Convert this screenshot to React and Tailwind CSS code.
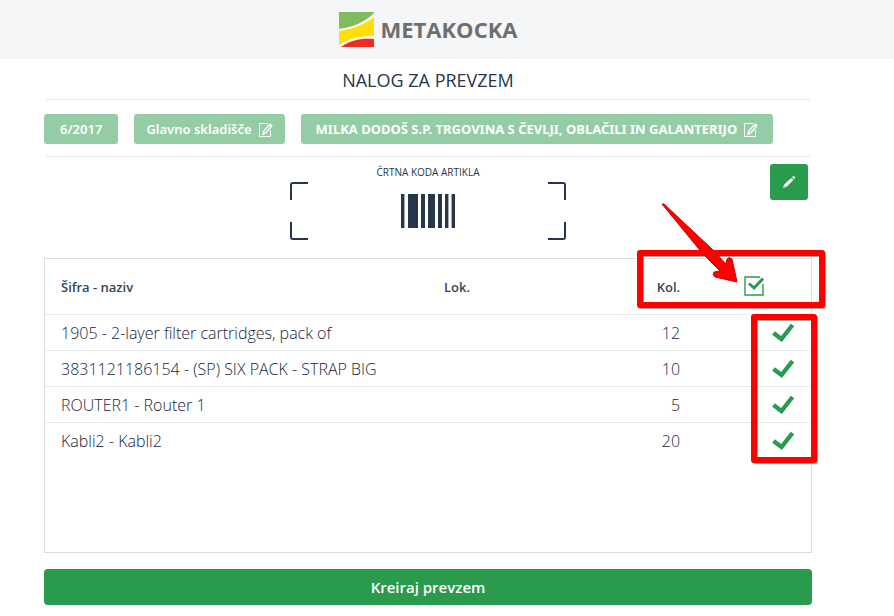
const items = [
  { name: '1905 - 2-layer filter cartridges, pack of', location: '', quantity: 12 },
  { name: '3831121186154 - (SP) SIX PACK - STRAP BIG', location: '', quantity: 10 },
  { name: 'ROUTER1 - Router 1', location: '', quantity: 5 },
  { name: 'Kabli2 - Kabli2', location: '', quantity: 20 },
];

function Logo() {
  return (
    <a href="#" className="flex items-start gap-[7px] pt-3" aria-label="Metakocka">
      <svg width="35" height="35" viewBox="0 0 36 35" preserveAspectRatio="none" aria-hidden="true">
        <rect width="36" height="35" fill="#fbfaf0" />
        <path d="M0 0H36V1C28 9 16 15 0 17Z" fill="#80bb62" />
        <path d="M0 19C15 17 27 12 36 5V24C22 24 9 27 0 33Z" fill="#ffde0a" />
        <path d="M2 35C12 28 23 26 36 27V35Z" fill="#eb2d26" />
      </svg>
      <span className="text-[22px] leading-[34px] font-bold text-[#706f6f]">METAKOCKA</span>
    </a>
  );
}

function EditSquareIcon() {
  return (
    <svg width="14" height="14" viewBox="0 0 14 14" fill="none" aria-hidden="true">
      <path d="M9 .5H.5V13.5H11.5V7" stroke="currentColor" />
      <path d="M11.4 .2L13.8 2.6L12.8 3.6L10.4 1.2Z" fill="currentColor" />
      <path d="M10.2 1.9L12.1 3.8L6.7 10L4 11.2L4.6 8.2Z" stroke="currentColor" strokeWidth="1.4" />
      <path d="M4.4 8.6L6.4 10.5L3.7 11.5Z" fill="currentColor" />
    </svg>
  );
}

function PencilIcon() {
  return (
    <svg width="14" height="14" viewBox="0 0 14 14" aria-hidden="true">
      <path d="M9.9 2.3L11 1.2Q11.6 .7 12.2 1.2L13 2Q13.5 2.6 13 3.2L11.9 4.3Z" fill="currentColor" />
      <path fillRule="evenodd" d="M9.2 3L11.3 5.1L4.5 12L1 13L2 9.7ZM3 10.2L2.5 11.9L4.1 11.4Z" fill="currentColor" />
    </svg>
  );
}

function TickIcon() {
  return (
    <svg width="24" height="20" viewBox="0 0 24 20" role="img" aria-label="Potrjeno" className="ml-auto block">
      <path d="M2.5 10L10.5 16L21.5 2" fill="none" stroke="#2a9a4c" strokeWidth="4.4" />
    </svg>
  );
}

function Corner({ className }) {
  return <span className={'size-[18px] border-[#27364b] ' + className} />;
}

function Barcode() {
  return (
    <svg width="54" height="34" viewBox="0 0 54 34" fill="#27364b" aria-hidden="true">
      <rect x="0" width="3.4" height="34" />
      <rect x="7" width="10" height="34" />
      <rect x="20" width="4" height="34" />
      <rect x="27" width="7" height="34" />
      <rect x="37" width="4" height="34" />
      <rect x="44" width="3.4" height="34" />
      <rect x="50.6" width="3.4" height="34" />
    </svg>
  );
}

function Annotations() {
  return (
    <svg
      width="192"
      height="268"
      viewBox="0 0 192 268"
      className="pointer-events-none absolute -top-[60px] -right-[18px]"
      aria-hidden="true"
    >
      <g transform="translate(1 1)" fill="none" stroke="#666" strokeWidth="6" strokeLinejoin="round" opacity=".6">
        <rect x="3" y="54" width="182" height="52" />
        <rect x="117" y="118" width="60" height="143" />
      </g>
      <g fill="none" stroke="#fe0000" strokeWidth="6" strokeLinejoin="round">
        <rect x="3" y="54" width="182" height="52" />
        <rect x="117" y="118" width="60" height="143" />
      </g>
      <path
        d="M25 5L27 5L75 50L89 65L90 60Q92 57 95 60L100 83L78 78Q75 76 77 73L83 72L66 55Z"
        fill="#fe0000"
        stroke="#d00000"
        strokeWidth="1"
        strokeLinejoin="round"
      />
    </svg>
  );
}

const tag =
  "flex h-[30px] items-center gap-[7px] rounded-[3px] bg-[#94cca5] pt-px font-['Noto_Sans','Open_Sans',sans-serif] text-[13px] whitespace-nowrap text-white";

export default function App() {
  return (
    <div className="min-h-screen overflow-x-hidden bg-white font-['Open_Sans','Noto_Sans',sans-serif] text-[#27364b]">
      <header className="flex h-[59px] justify-center bg-[#f5f6f8] pr-[82px] pl-[44px]">
        <Logo />
      </header>

      <main className="pr-[82px] pl-[44px]">
        <h1 className="pt-[9px] pb-[7px] text-center text-[18px] leading-6">NALOG ZA PREVZEM</h1>
        <hr className="mx-[2px] border-[#e8e9ed]" />

        <div className="flex gap-4 pt-[14px] pb-3">
          <button type="button" className={tag + ' px-4 font-semibold'}>6/2017</button>
          <button type="button" className={tag + ' px-3 font-semibold'}>
            Glavno skladišče <EditSquareIcon />
          </button>
          <button type="button" className={tag + ' px-[15px] font-bold'}>
            MILKA DODOŠ S.P. TRGOVINA S ČEVLJI, OBLAČILI IN GALANTERIJO <EditSquareIcon />
          </button>
        </div>
        <hr className="mx-[2px] border-[#e8e9ed]" />

        <section className="grid grid-cols-[38px_1fr_38px] px-1 pt-[7px] pb-[18px]">
          <div className="col-start-2 flex flex-col items-center">
            <h2 className="text-[10px] leading-4 pb-[2px]">ČRTNA KODA ARTIKLA</h2>
            <div className="flex h-[58px] w-[276px] justify-between">
              <div className="flex flex-col justify-between">
                <Corner className="rounded-tl-[3px] border-t-2 border-l-2" />
                <Corner className="rounded-bl-[3px] border-b-2 border-l-2" />
              </div>
              <div className="flex items-center">
                <Barcode />
              </div>
              <div className="flex flex-col justify-between">
                <Corner className="rounded-tr-[3px] border-t-2 border-r-2" />
                <Corner className="rounded-br-[3px] border-r-2 border-b-2" />
              </div>
            </div>
          </div>
          <button
            type="button"
            aria-label="Uredi"
            className="flex h-9 items-center justify-center rounded-[3px] bg-[#2a9a4c] text-white"
          >
            <PencilIcon />
          </button>
        </section>

        <div className="relative min-h-[295px] border border-[#dcdde2]">
          <table className="w-full table-fixed border-collapse text-left">
            <thead>
              <tr className="h-[55px] border-b border-[#e8e9ed] text-[13px] text-[#364457]">
                <th scope="col" className="w-1/2 px-4 pt-[2px] font-semibold">Šifra - naziv</th>
                <th scope="col" className="w-1/5 px-4 pt-[2px] font-semibold">Lok.</th>
                <th scope="col" className="w-[15%] px-4 pt-[2px] text-right font-semibold">Kol.</th>
                <th scope="col" className="w-[15%] pr-[47px]">
                  <label className="ml-auto grid size-5">
                    <input
                      type="checkbox"
                      defaultChecked
                      aria-label="Potrdi vse"
                      className="col-start-1 row-start-1 size-5 appearance-none"
                    />
                    <svg
                      width="20"
                      height="20"
                      viewBox="0 0 20 20"
                      fill="none"
                      stroke="#2a9a4c"
                      className="pointer-events-none col-start-1 row-start-1"
                      aria-hidden="true"
                    >
                      <path d="M16 1H1V19H19V8" strokeWidth="1.4" />
                      <path d="M5 7.5L10 12L19 2.5" strokeWidth="3" />
                    </svg>
                  </label>
                </th>
              </tr>
            </thead>
            <tbody className="text-[16px] font-light text-[#16253b]">
              {items.map((item) => (
                <tr key={item.name} className="h-9 border-b border-[#e8e9ed] last:border-b-0">
                  <td className="px-4 pt-[2px]">{item.name}</td>
                  <td className="px-4 pt-[2px]">{item.location}</td>
                  <td className="px-4 pt-[2px] text-right">{item.quantity}</td>
                  <td className="px-4 pt-[2px]">
                    <TickIcon />
                  </td>
                </tr>
              ))}
            </tbody>
          </table>
          <Annotations />
        </div>

        <button
          type="button"
          className="mt-4 h-9 w-full rounded-[4px] bg-[#2a9a4c] text-[15px] font-semibold text-white"
        >
          Kreiraj prevzem
        </button>
      </main>
    </div>
  );
}
